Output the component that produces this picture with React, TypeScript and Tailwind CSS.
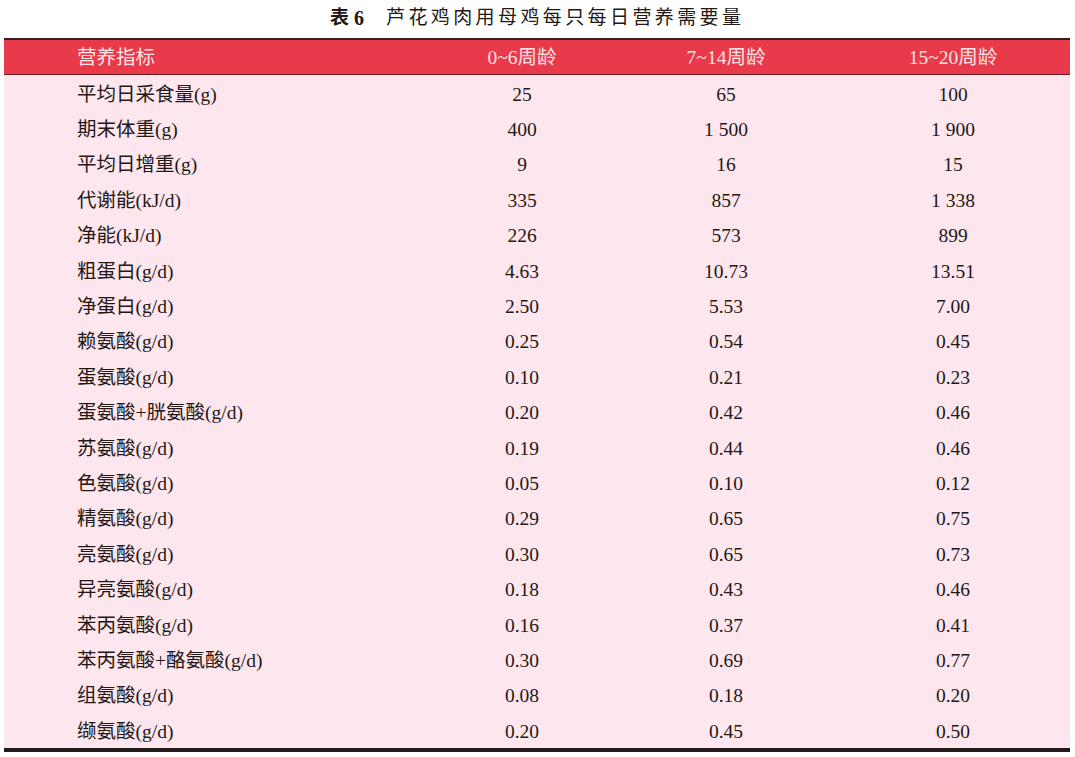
const rows: [string, string, string, string][] = [
  ["平均日采食量(g)", "25", "65", "100"],
  ["期末体重(g)", "400", "1 500", "1 900"],
  ["平均日增重(g)", "9", "16", "15"],
  ["代谢能(kJ/d)", "335", "857", "1 338"],
  ["净能(kJ/d)", "226", "573", "899"],
  ["粗蛋白(g/d)", "4.63", "10.73", "13.51"],
  ["净蛋白(g/d)", "2.50", "5.53", "7.00"],
  ["赖氨酸(g/d)", "0.25", "0.54", "0.45"],
  ["蛋氨酸(g/d)", "0.10", "0.21", "0.23"],
  ["蛋氨酸+胱氨酸(g/d)", "0.20", "0.42", "0.46"],
  ["苏氨酸(g/d)", "0.19", "0.44", "0.46"],
  ["色氨酸(g/d)", "0.05", "0.10", "0.12"],
  ["精氨酸(g/d)", "0.29", "0.65", "0.75"],
  ["亮氨酸(g/d)", "0.30", "0.65", "0.73"],
  ["异亮氨酸(g/d)", "0.18", "0.43", "0.46"],
  ["苯丙氨酸(g/d)", "0.16", "0.37", "0.41"],
  ["苯丙氨酸+酪氨酸(g/d)", "0.30", "0.69", "0.77"],
  ["组氨酸(g/d)", "0.08", "0.18", "0.20"],
  ["缬氨酸(g/d)", "0.20", "0.45", "0.50"],
]

const font = { fontFamily: '"Liberation Serif", "Noto Sans CJK SC", serif' }

export default function App() {
  return (
    <div className="w-[1075px] h-[757px] bg-white overflow-hidden" style={font}>
      {/* Title */}
      <div className="h-[38px] flex items-center pl-[330px] pb-[2px] text-[#231815]">
        <span className="text-[19px] font-bold">表</span>
        <span className="ml-[5px] text-[20px] font-bold">6</span>
        <span className="ml-[22px] text-[19px] tracking-[3.4px]">芦花鸡肉用母鸡每只每日营养需要量</span>
      </div>

      <div className="ml-[4px] w-[1066px]">
        <div className="h-[2px] bg-[#3b1d1f]" />
        {/* Header */}
        <div className="grid grid-cols-[418px_200px_208px_1fr] h-[35px] items-center pt-[1px] bg-[#e83a4a] border-b border-[#6b1c22] text-[#fde3e6] text-[19.5px]">
          <div className="pl-[73px]">营养指标</div>
          <div className="text-center">0~6周龄</div>
          <div className="text-center">7~14周龄</div>
          <div className="text-center pl-[6px]">15~20周龄</div>
        </div>
        {/* Body */}
        <div className="bg-[#fde6ee] text-[#231815] text-[19.5px]">
          {rows.map((r) => (
            <div key={r[0]} className="grid grid-cols-[418px_200px_208px_1fr] h-[35.42px] items-center pt-[3px]">
              <div className="pl-[73px]">{r[0]}</div>
              <div className="text-center">{r[1]}</div>
              <div className="text-center">{r[2]}</div>
              <div className="text-center pl-[6px]">{r[3]}</div>
            </div>
          ))}
        </div>
        <div className="h-[4px] bg-[#231a1a]" />
      </div>
    </div>
  )
}
